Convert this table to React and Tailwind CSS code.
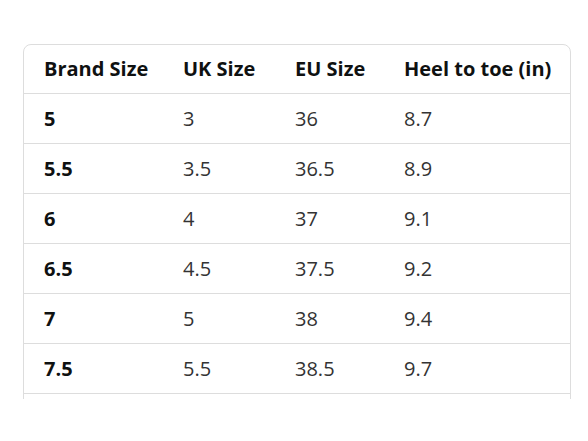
/**
 * Size chart table — brand size vs UK / EU sizes and heel-to-toe length.
 * Cropped at the bottom, as on the product page.
 */
const rows = [
  ['5', '3', '36', '8.7'],
  ['5.5', '3.5', '36.5', '8.9'],
  ['6', '4', '37', '9.1'],
  ['6.5', '4.5', '37.5', '9.2'],
  ['7', '5', '38', '9.4'],
  ['7.5', '5.5', '38.5', '9.7'],
];

const headers = ['Brand Size', 'UK Size', 'EU Size', 'Heel to toe (in)'];
const colWidths = ['w-[139px]', 'w-[112px]', 'w-[109px]', 'flex-1'];

function App() {
  return (
    <div
      className="h-[441px] w-[588px] bg-white pl-[23px] pt-[44px] text-[20px] text-[#0f1111]"
      style={{ fontFamily: '"Open Sans", "Noto Sans", sans-serif' }}
    >
      <div className="h-[355px] w-[548px] overflow-hidden">
        <div className="rounded-lg border border-[#dddddd]">
          {/* Header row */}
          <div className="flex h-[49px] items-center border-b border-[#dddddd] font-bold">
            {headers.map((h, i) => (
              <div key={h} className={`${colWidths[i]} whitespace-nowrap pl-[20px]`}>
                {h}
              </div>
            ))}
          </div>

          {/* Body rows */}
          {rows.map((row) => (
            <div key={row[0]} className="flex h-[50px] items-center border-b border-[#dddddd]">
              {row.map((cell, i) => (
                <div
                  key={i}
                  className={`${colWidths[i]} pl-[20px] ${i === 0 ? 'font-bold' : 'text-[#333333]'}`}
                >
                  {cell}
                </div>
              ))}
            </div>
          ))}

          {/* Next row, cut off by the crop */}
          <div className="h-[50px]" />
        </div>
      </div>
    </div>
  );
}

export default App;
